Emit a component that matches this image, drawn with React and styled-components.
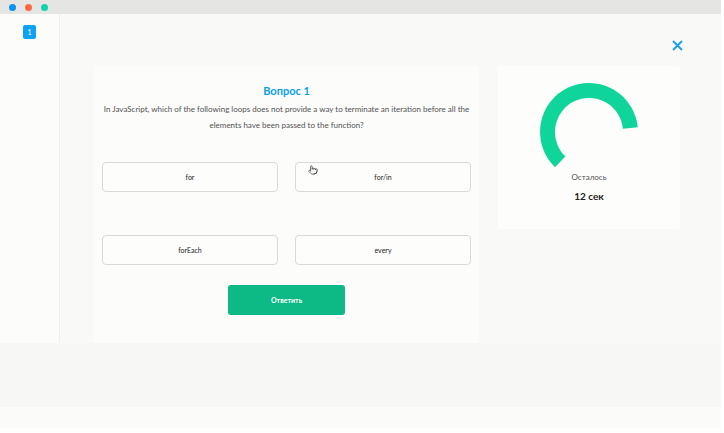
import React from 'react';
import styled, { createGlobalStyle } from 'styled-components';
import { Pointer } from 'lucide-react';

const GlobalStyle = createGlobalStyle`
  body {
    margin: 0;
    background: #ffffff;
    font-family: Lato, "Noto Sans", sans-serif;
  }
`;

const Window = styled.div`
  width: 721px;
`;

const TitleBar = styled.div`
  height: 14px;
  background: #e5e5e4;
  display: flex;
  align-items: center;
  gap: 9px;
  padding-left: 9px;
`;

const Dot = styled.span`
  width: 7px;
  height: 7px;
  border-radius: 50%;
  background: ${p => p.color};
`;

const Body = styled.div`
  display: flex;
  height: 329px;
`;

const Sidebar = styled.div`
  width: 60px;
  background: #fcfcfb;
  border-right: 1px solid #efefed;
  display: flex;
  justify-content: center;
  padding-top: 11px;
  box-sizing: border-box;
`;

const Badge = styled.div`
  width: 13px;
  height: 14px;
  border-radius: 2px;
  background: #0ea2f2;
  color: #ffffff;
  font-size: 7px;
  display: flex;
  align-items: center;
  justify-content: center;
`;

const Main = styled.main`
  flex: 1;
  background: #f9f9f8;
  display: flex;
  flex-direction: column;
`;

const TopRow = styled.div`
  height: 52px;
  display: flex;
  justify-content: flex-end;
  align-items: flex-start;
  padding: 26px 38px 0 0;
  box-sizing: border-box;
`;

const CloseButton = styled.button`
  border: none;
  background: none;
  padding: 0;
  width: 11px;
  height: 11px;
  display: flex;
`;

const Content = styled.div`
  display: flex;
  align-items: flex-start;
  gap: 19px;
  padding-left: 34px;
  flex: 1;
`;

const QuestionCard = styled.section`
  width: 385px;
  height: 277px;
  background: #fcfcfb;
  box-sizing: border-box;
  padding: 18px 4px 0;
  display: flex;
  flex-direction: column;
  align-items: center;
`;

const Title = styled.h2`
  margin: 0;
  font-size: 11px;
  line-height: 13px;
  font-weight: 700;
  color: #0ba0e6;
`;

const Question = styled.p`
  margin: 4px 0 0;
  font-size: 8px;
  line-height: 16px;
  font-weight: 400;
  color: #525252;
  text-align: center;
  white-space: nowrap;
`;

const Options = styled.div`
  display: grid;
  grid-template-columns: 176px 176px;
  column-gap: 17px;
  row-gap: 43px;
  margin-top: 29px;
`;

const Option = styled.button`
  position: relative;
  height: 30px;
  border: 1px solid #d9d9d8;
  border-radius: 4px;
  background: #fdfdfc;
  font-family: Lato, "Noto Sans", sans-serif;
  font-size: 7px;
  font-weight: 400;
  color: #222222;
  padding: 0;
`;

const Cursor = styled.span`
  position: absolute;
  left: 12px;
  top: 2px;
  display: flex;
  color: #333333;
`;

const SubmitButton = styled.button`
  margin-top: 20px;
  width: 117px;
  height: 30px;
  border: none;
  border-radius: 3px;
  background: #0db984;
  color: #ffffff;
  font-family: Lato, "Noto Sans", sans-serif;
  font-size: 7px;
  font-weight: 700;
`;

const TimerCard = styled.aside`
  width: 182px;
  height: 163px;
  background: #fdfdfc;
  border-radius: 3px;
  box-sizing: border-box;
  padding-top: 16px;
  display: flex;
  flex-direction: column;
  align-items: center;
`;

const Ring = styled.svg`
  display: block;
`;

const Label = styled.div`
  font-size: 8px;
  line-height: 10px;
  color: #555555;
`;

const Seconds = styled.div`
  margin-top: 8px;
  font-size: 10px;
  line-height: 12px;
  font-weight: 700;
  color: #222222;
`;

const Footer = styled.div`
  height: 64px;
  background: #f7f7f6;
`;

const FooterStrip = styled.div`
  height: 21px;
  background: #fbfbfa;
`;

const options = ['for', 'for/in', 'forEach', 'every'];

export default function App() {
  return (
    <Window>
      <GlobalStyle />
      <TitleBar>
        <Dot color="#0a93f0" />
        <Dot color="#fa6a45" />
        <Dot color="#12d3b0" />
      </TitleBar>
      <Body>
        <Sidebar>
          <Badge>1</Badge>
        </Sidebar>
        <Main>
          <TopRow>
            <CloseButton aria-label="close">
              <svg width="11" height="11" viewBox="0 0 11 11">
                <path d="M1 1 L10 10 M10 1 L1 10" stroke="#1a9ee8" strokeWidth="1.8" />
              </svg>
            </CloseButton>
          </TopRow>
          <Content>
            <QuestionCard>
              <Title>Вопрос 1</Title>
              <Question>
                In JavaScript, which of the following loops does not provide a way to terminate an iteration before all the
                <br />
                elements have been passed to the function?
              </Question>
              <Options>
                {options.map((item, i) => (
                  <Option key={item}>
                    {i === 1 && (
                      <Cursor>
                        <Pointer size={10} strokeWidth={1.6} />
                      </Cursor>
                    )}
                    {item}
                  </Option>
                ))}
              </Options>
              <SubmitButton>Ответить</SubmitButton>
            </QuestionCard>
            <TimerCard>
              <Ring width="100" height="90" viewBox="0 0 100 90">
                <path
                  d="M21.17 79.85 A41.5 41.5 0 1 1 91.3 46"
                  fill="none"
                  stroke="#10d59b"
                  strokeWidth="15"
                />
              </Ring>
              <Label>Осталось</Label>
              <Seconds>12 сек</Seconds>
            </TimerCard>
          </Content>
        </Main>
      </Body>
      <Footer />
      <FooterStrip />
    </Window>
  );
}
